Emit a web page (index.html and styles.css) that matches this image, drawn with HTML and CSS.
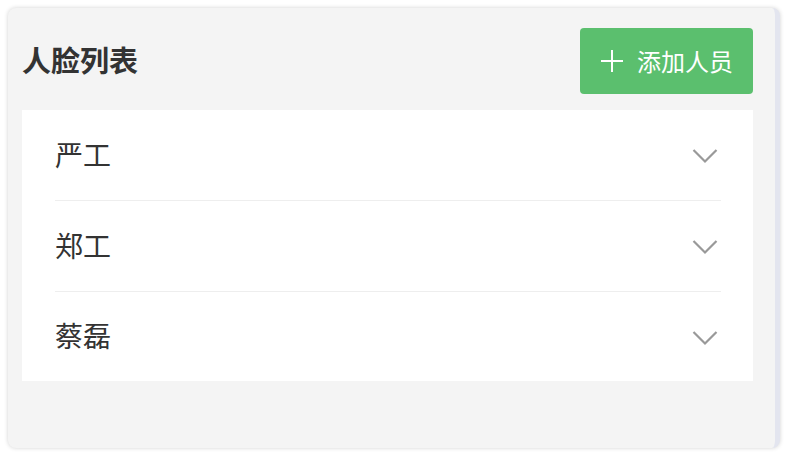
FILE: index.html
```html
<!DOCTYPE html>
<html lang="zh-CN">
<head>
<meta charset="utf-8">
<link rel="stylesheet" href="styles.css">
</head>
<body>
<div class="card">
  <div class="header">
    <h1 class="title">人脸列表</h1>
    <button class="add-btn">
      <svg class="plus" width="22" height="22" viewBox="0 0 22 22"><path d="M11 0V22M0 11H22" stroke="#fff" stroke-width="2" fill="none"/></svg>
      <span>添加人员</span>
    </button>
  </div>
  <div class="list">
    <div class="row"><span class="name">严工</span><svg class="chev" width="26" height="16" viewBox="0 0 26 16"><path d="M1.5 2L13 13.5L24.5 2" stroke="#999" stroke-width="2.2" fill="none"/></svg></div>
    <div class="row"><span class="name">郑工</span><svg class="chev" width="26" height="16" viewBox="0 0 26 16"><path d="M1.5 2L13 13.5L24.5 2" stroke="#999" stroke-width="2.2" fill="none"/></svg></div>
    <div class="row"><span class="name">蔡磊</span><svg class="chev" width="26" height="16" viewBox="0 0 26 16"><path d="M1.5 2L13 13.5L24.5 2" stroke="#999" stroke-width="2.2" fill="none"/></svg></div>
  </div>
</div>
</body>
</html>
```

FILE: styles.css
```css
* { box-sizing: border-box; }
html, body { margin: 0; padding: 0; background: #fff; }
body { padding: 8px; font-family: "Noto Sans CJK SC", "Noto Sans", sans-serif; }
.card {
  height: 440px;
  background: #f4f4f4;
  border-radius: 8px;
  border-right: 5px solid #e3e5ef;
  box-shadow: 0 0 4px rgba(0,0,0,0.18);
  padding: 20px 22px 0 14px;
}
.header {
  display: flex;
  align-items: center;
  justify-content: space-between;
  height: 66px;
  margin-bottom: 16px;
}
.title {
  margin: 0 0 3px 0;
  font-size: 29px;
  font-weight: 700;
  color: #333;
  line-height: 1;
}
.add-btn {
  width: 173px;
  height: 66px;
  border: none;
  border-radius: 4px;
  background: #5bbf6e;
  color: #fff;
  font-family: inherit;
  font-size: 24px;
  display: flex;
  align-items: center;
  padding: 0 0 0 21px;
  gap: 14px;
}
.add-btn span { line-height: 1; }
.list { background: #fff; }
.row {
  height: 91px;
  margin: 0 32px 0 33px;
  display: flex;
  align-items: center;
  justify-content: space-between;
  border-bottom: 1px solid #eeeeee;
}
.row:last-child { border-bottom: none; height: 89px; }
.name {
  font-size: 28px;
  color: #333;
  line-height: 1;
  margin-bottom: 3px;
}
.chev { margin-right: 3px; margin-top: 2px; }
```
